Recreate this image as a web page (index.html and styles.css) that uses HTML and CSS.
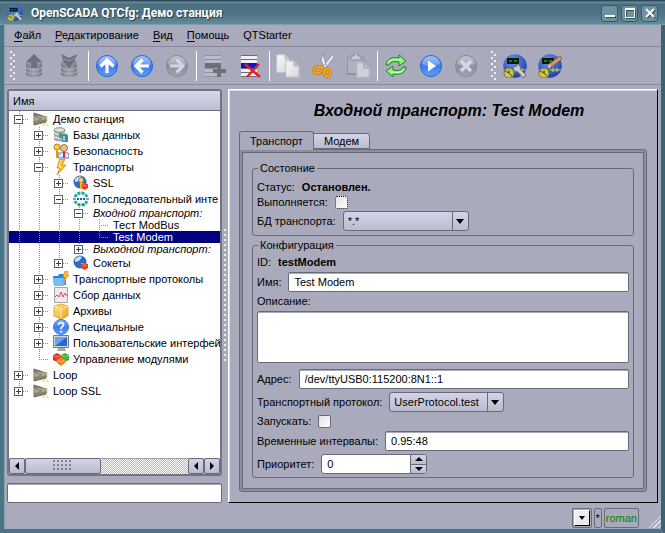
FILE: index.html
```html
<!DOCTYPE html>
<html lang="ru">
<head>
<meta charset="utf-8">
<title>OpenSCADA QTCfg: Демо станция</title>
<link rel="stylesheet" href="styles.css">
</head>
<body>
<svg class="defs" aria-hidden="true">
  <defs>
    <linearGradient id="blue" x1="0" y1="0" x2="0" y2="1"><stop offset="0" stop-color="#8db4ff"/><stop offset=".5" stop-color="#3d7af0"/><stop offset="1" stop-color="#5fa4ff"/></linearGradient>
    <linearGradient id="grey" x1="0" y1="0" x2="0" y2="1"><stop offset="0" stop-color="#b4b5c4"/><stop offset=".5" stop-color="#8c8e9d"/><stop offset="1" stop-color="#a3a5b4"/></linearGradient>
    <linearGradient id="disk" x1="0" y1="0" x2="1" y2="0"><stop offset="0" stop-color="#777986"/><stop offset=".5" stop-color="#a2a3b0"/><stop offset="1" stop-color="#757784"/></linearGradient>
    <linearGradient id="page" x1="0" y1="0" x2="1" y2="1"><stop offset="0" stop-color="#fafafa"/><stop offset="1" stop-color="#d3d4da"/></linearGradient>
    <linearGradient id="gold" x1="0" y1="0" x2="1" y2="1"><stop offset="0" stop-color="#ffe98a"/><stop offset="1" stop-color="#eba11d"/></linearGradient>
    <radialGradient id="globe" cx=".4" cy=".3" r=".8"><stop offset="0" stop-color="#6d91ee"/><stop offset=".7" stop-color="#2d54bd"/><stop offset="1" stop-color="#16347e"/></radialGradient>
  </defs>
  <symbol id="stack" viewBox="0 0 24 24">
    <path d="M4 8v12c0 4 16 4 16 0V8z" fill="url(#disk)"/>
    <path d="M4 13c0 3.500 16 3.500 16 0M4 17c0 3.500 16 3.500 16 0" fill="none" stroke="#b0b2bf"/>
    <ellipse cx="12" cy="8.500" rx="8" ry="3" fill="#92949f"/>
  </symbol>
  <symbol id="load" viewBox="0 0 24 24"><use href="#stack"/><path d="M12 0l8 8h-5v6H9V8H4z" fill="#6e707c"/></symbol>
  <symbol id="save" viewBox="0 0 24 24"><use href="#stack"/><path d="M4 0l4 2 4 2 4-2 4-2-3 9h-1l-4 6-4-6H7z" fill="#6e707c"/><path d="M6 4l6 3 6-3" fill="none" stroke="#9b9daa"/></symbol>
  <symbol id="disc" viewBox="0 0 24 24"><circle cx="12" cy="12" r="10.500" fill="url(#blue)" stroke="#2663cf"/><path d="M3 10a9 8 0 0 1 18 0Q12 15 3 10" fill="#fff" opacity=".22"/></symbol>
  <symbol id="gdisc" viewBox="0 0 24 24"><circle cx="12" cy="12" r="10.500" fill="url(#grey)" stroke="#858795"/><path d="M3 10a9 8 0 0 1 18 0Q12 15 3 10" fill="#fff" opacity=".2"/></symbol>
  <symbol id="arrow" viewBox="0 0 24 24"><path d="M12 19V7M5.500 12.500L12 6l6.500 6.500" fill="none" stroke="currentColor" stroke-width="3.200"/></symbol>
  <symbol id="up" viewBox="0 0 24 24"><use href="#disc"/><use href="#arrow" color="#fff"/></symbol>
  <symbol id="back" viewBox="0 0 24 24"><use href="#disc"/><g transform="rotate(-90 12 12)"><use href="#arrow" color="#fff"/></g></symbol>
  <symbol id="next" viewBox="0 0 24 24"><use href="#gdisc"/><g transform="rotate(90 12 12)"><use href="#arrow" color="#d3d4de"/></g></symbol>
  <symbol id="add" viewBox="0 0 24 24"><path d="M2 1h16v22H2z" fill="#b9bbca"/><path d="M2 1.500h16M2 5.500h16M2 14.500h10M2 18.500h10M2 22.500h16" stroke="#9092a0"/><path d="M2 9h16v5H2z" fill="#6c6e79"/><path d="M16 11v12M10 17h13" stroke="#6d6f7b" stroke-width="4"/></symbol>
  <symbol id="del" viewBox="0 0 24 24"><path d="M3 1h16v22H3z" fill="#f1f1f5"/><path d="M3 1.500h16M3 5.500h16M3 14.500h16M3 18.500h16M3 22.500h16" stroke="#6b6c76"/><path d="M3 9h16v5H3z" fill="#0a14cc"/><path d="M7 10l15 13M21 10L9 23" stroke="#e5202a" stroke-width="2.500"/></symbol>
  <symbol id="copy" viewBox="0 0 24 24"><path d="M1 1h8l4 4v13H1z" fill="url(#page)" stroke="#d9dae2"/><path d="M9 1v4h4" fill="#c3c4cc" stroke="#bbbcc6"/><path d="M10 7h8l5 5v11H10z" fill="url(#page)" stroke="#c2c3cc"/><path d="M18 7v5h5" fill="#c3c4cc" stroke="#adafb9"/></symbol>
  <symbol id="cut" viewBox="0 0 24 24"><path d="M12 0l4 14-2 1-4-9zM21 1l2 2-9 12-3-1z" fill="#e9ebf0" stroke="#8b909c" stroke-width=".8"/><ellipse cx="7" cy="16" rx="4.500" ry="3" transform="rotate(-20 7 16)" fill="none" stroke="#c77608" stroke-width="3.400"/><ellipse cx="7" cy="16" rx="4.500" ry="3" transform="rotate(-20 7 16)" fill="none" stroke="#fba918" stroke-width="2"/><ellipse cx="16" cy="18.500" rx="3" ry="3.800" fill="none" stroke="#c77608" stroke-width="3.400"/><ellipse cx="16" cy="18.500" rx="3" ry="3.800" fill="none" stroke="#fba918" stroke-width="2"/></symbol>
  <symbol id="paste" viewBox="0 0 24 24"><path d="M1 3h17v18H1z" fill="#9193a2"/><path d="M2 4h15v15H2z" fill="#b0b2c0"/><path d="M5 2h3V0h4v2h3v4H5z" fill="#c9cad7" stroke="#8c8e9b"/><path d="M11 9h7l5 5v9H11z" fill="#cfd0db" stroke="#bdbfcc"/><path d="M18 9v5h5" fill="#bbbdc9" stroke="#a2a4b2"/></symbol>
  <symbol id="reload" viewBox="0 0 24 24"><g id="half"><path d="M2 11C3 4 9 3 15 4V1l7 6-7 5V8C9 7 6 8 5 11z" fill="#8eed77" stroke="#188324"/><path d="M4 9c2-4 7-4 13-3" stroke="#d9ffc8" fill="none"/></g><use href="#half" transform="rotate(180 12 12)"/></symbol>
  <symbol id="play" viewBox="0 0 24 24"><use href="#disc"/><path d="M9 6.500l8 5.500-8 5.500z" fill="#fff"/></symbol>
  <symbol id="stop" viewBox="0 0 24 24"><use href="#gdisc"/><path d="M7 7l10 10M17 7L7 17" stroke="#d6d7e1" stroke-width="3.500"/></symbol>
  <symbol id="cfgbase" viewBox="0 0 24 24"><circle cx="12" cy="12" r="11.800" fill="url(#globe)"/><path d="M4 4h12v6H4z" fill="#06180b"/><path d="M6 6v2h3V6zM11 6v2h3V6z" fill="#0a851c"/><circle cx="6" cy="19" r="5" fill="#cbc94b" stroke="#77792b"/><path d="M6 19l-4-2M6 19l3 3M6 19v-3" stroke="#43451e"/><path d="M12 16h11M15 14v4M19 14v4" stroke="#e2d13a"/></symbol>
  <symbol id="cfg" viewBox="0 0 24 24"><use href="#cfgbase"/><path d="M10 12l3 1 1-3 3 2 1 4 5 5-3 3-5-6-4-1z" fill="#c6cad1" stroke="#6d727d"/></symbol>
  <symbol id="vis" viewBox="0 0 24 24"><use href="#cfgbase"/><path d="M22 2l2 3L13 13l-3 1 1-4z" fill="#d39d6b" stroke="#8b623f"/><path d="M11 10l-1 4 3-1z" fill="#f3deb7"/></symbol>
  <symbol id="station" viewBox="0 0 16 16"><path d="M1 2l12 4v5L1 14z" fill="#85857c" stroke="#6b6b66"/><path d="M0 9l2-3 2 3h-3M5 9V6h3M9 9V6h3v2H9M13 6h2M13 9h2" fill="none" stroke="#c6c36a"/><path d="M9 15h2v-2h3v2h2" fill="none" stroke="#e6df75"/></symbol>
  <symbol id="db" viewBox="0 0 16 16"><path d="M1 3v10q6 3 11 0V3z" fill="#a6aaa9"/><ellipse cx="6.500" cy="3" rx="5.500" ry="2.300" fill="#dfe3e0" stroke="#848a88"/><path d="M1 6q6 3 11 0M1 10q6 3 11 0" stroke="#f5f6f5" fill="none"/><path d="M6 6l8 1v5l-8-1z" fill="#46a357"/><path d="M9 8h6v7H9z" fill="#4580c6"/><path d="M10 9h2v5h-2z" fill="#9bcbed"/></symbol>
  <symbol id="secure" viewBox="0 0 16 16"><circle cx="11" cy="5" r="3.500" fill="#ecc08b" stroke="#a76f39"/><path d="M5 15q0-6 6-6t5 6z" fill="#dce9ff" stroke="#4e7fd0"/><path d="M11 9v6" stroke="#d63030" stroke-width="2"/><circle cx="4" cy="4" r="3" fill="#ffd14a" stroke="#c27c10"/><path d="M4 7v8M4 10h2M4 13h2" stroke="#e49a16" stroke-width="2"/></symbol>
  <symbol id="bolt" viewBox="0 0 16 16"><path d="M7 0h5L9 6h4L4 16l3-7H4z" fill="#ffc31f" stroke="#e07a10" stroke-width=".8"/><path d="M8 1L6 8h3" fill="none" stroke="#fff3a8"/></symbol>
  <symbol id="net" viewBox="0 0 16 16"><circle cx="7" cy="7" r="6.500" fill="#2d6cc0"/><path d="M2 4q4-4 7-2l-3 4-4 1zM8 8h4l-2 5z" fill="#c7e2f4"/><path d="M8 9l3-1 4 1v4l-3 2-4-2z" fill="#e3401f"/><path d="M10 10l3 1" stroke="#ffa16d"/></symbol>
  <symbol id="ssl" viewBox="0 0 16 16"><use href="#net"/><circle cx="8" cy="5" r="2.500" fill="#ffd24b" stroke="#b7791a"/><path d="M8 7v7" stroke="#f0b326" stroke-width="2"/></symbol>
  <symbol id="serial" viewBox="0 0 16 16"><path d="M2 6a6.500 6.500 0 0 1 12 0M2 10a6.500 6.500 0 0 0 12 0" fill="none" stroke="#18b19a" stroke-width="3" stroke-dasharray="3 1"/><path d="M5 14h2M10 14h2" stroke="#2c9a35" stroke-width="2"/><path d="M0 8h3M13 8h3" stroke="#1d35b0"/><path d="M4 8h8" stroke="#2d49c9" stroke-width="2" stroke-dasharray="2 1"/></symbol>
  <symbol id="folder" viewBox="0 0 16 16"><path d="M0 5h5l1-2h7v11H1z" fill="#2c83d8"/><path d="M0 7h13l-2 8H1z" fill="#77bdf7"/><path d="M12 0h3l-1 4h2l-6 7 2-5h-2z" fill="#ffc020" stroke="#dd7c12" stroke-width=".7"/></symbol>
  <symbol id="chart" viewBox="0 0 16 16"><path d="M1.500 .5h13v15h-13z" fill="#ececee" stroke="#a4a5ab"/><path d="M2 10l2-2 2 2 2-5 2 5 2-4 2 3" fill="none" stroke="#dc4c4c"/></symbol>
  <symbol id="box" viewBox="0 0 16 16"><path d="M1 3l7-2 7 2v10l-7 3-7-3z" fill="url(#gold)" stroke="#d1901c" stroke-width=".7"/><path d="M1 3l7 3 7-3M8 6v9" fill="none" stroke="#fff0a8"/><path d="M4 2l7 3v3" stroke="#f7c34d" fill="none"/></symbol>
  <symbol id="help" viewBox="0 0 16 16"><circle cx="8" cy="8" r="7.500" fill="url(#blue)" stroke="#3d76d8"/><path d="M5.500 6c0-3.500 5.500-3 5 0-.3 1.500-2.500 1.500-2.500 4M8 11.500v2" fill="none" stroke="#fff" stroke-width="1.700"/></symbol>
  <symbol id="screen" viewBox="0 0 16 16"><path d="M.5 .5h15v12H.5z" fill="#d5d7dc" stroke="#777b85"/><path d="M2 2h12v9H2z" fill="#2866d0"/><path d="M2 2h12L2 11z" fill="#69a4f0"/><path d="M5 13h7l1 3H4z" fill="#a7a9b0"/></symbol>
  <symbol id="modules" viewBox="0 0 16 16"><path d="M0 4l4-2 4 2v5l-4 2-4-2z" fill="#e13a22"/><path d="M8 4l4-2 4 2v5l-4 2-4-2z" fill="#41b03a"/><path d="M4 9l4-3 4 3v3l-4 3-4-3z" fill="#e8851d"/><path d="M0 4l4 2 4-2M8 4l4 2 4-2M4 9l4 2 4-2" stroke="#fff" opacity=".4" fill="none"/></symbol>
</svg>

<div class="window">
  <header class="titlebar">
    <svg class="app-icon" viewBox="0 0 24 24"><use href="#cfg"/></svg>
    <span class="caption">OpenSCADA QTCfg: Демо станция</span>
    <button class="win-btn" aria-label="Свернуть"><svg viewBox="0 0 10 10"><path d="M0 8h10" stroke="#fff" stroke-width="2"/></svg></button>
    <button class="win-btn" aria-label="Развернуть"><svg viewBox="0 0 10 10"><path d="M.5 .5h9v9h-9zM1 1.500h8" fill="none" stroke="#fff"/></svg></button>
    <button class="win-btn" aria-label="Закрыть"><svg viewBox="0 0 10 10"><path d="M1 1l8 8M9 1L1 9" stroke="#fff" stroke-width="2"/></svg></button>
  </header>

  <nav class="menubar">
    <button><u>Ф</u>айл</button>
    <button><u>Р</u>едактирование</button>
    <button><u>В</u>ид</button>
    <button><u>П</u>омощь</button>
    <button>QTStarter</button>
  </nav>

  <div class="toolbar">
    <span class="handle"></span>
    <button aria-label="Загрузить"><svg><use href="#load"/></svg></button>
    <button aria-label="Сохранить"><svg><use href="#save"/></svg></button>
    <span class="sep"></span>
    <button aria-label="Вверх"><svg><use href="#up"/></svg></button>
    <button aria-label="Назад"><svg><use href="#back"/></svg></button>
    <button aria-label="Вперёд"><svg><use href="#next"/></svg></button>
    <span class="sep"></span>
    <button aria-label="Добавить"><svg><use href="#add"/></svg></button>
    <button aria-label="Удалить"><svg><use href="#del"/></svg></button>
    <span class="sep"></span>
    <button aria-label="Копировать"><svg><use href="#copy"/></svg></button>
    <button aria-label="Вырезать"><svg><use href="#cut"/></svg></button>
    <button aria-label="Вставить"><svg><use href="#paste"/></svg></button>
    <span class="sep"></span>
    <button aria-label="Обновить"><svg><use href="#reload"/></svg></button>
    <button aria-label="Запустить"><svg><use href="#play"/></svg></button>
    <button aria-label="Остановить"><svg><use href="#stop"/></svg></button>
    <span class="handle second"></span>
    <button aria-label="Конфигуратор"><svg><use href="#cfg"/></svg></button>
    <button aria-label="Визуализация"><svg><use href="#vis"/></svg></button>
  </div>

  <main class="main">
    <section class="side">
      <div class="tree-frame">
        <div class="tree-head">Имя</div>
        <ul class="tree">
          <li><i class="node first"><button class="exp open" aria-label="Свернуть"></button></i><svg><use href="#station"/></svg><span>Демо станция</span></li>
          <li><i class="line"></i><i class="node"><button class="exp" aria-label="Развернуть"></button></i><svg><use href="#db"/></svg><span>Базы данных</span></li>
          <li><i class="line"></i><i class="node"><button class="exp" aria-label="Развернуть"></button></i><svg><use href="#secure"/></svg><span>Безопасность</span></li>
          <li><i class="line"></i><i class="node"><button class="exp open" aria-label="Свернуть"></button></i><svg><use href="#bolt"/></svg><span>Транспорты</span></li>
          <li><i class="line"></i><i class="line"></i><i class="node"><button class="exp" aria-label="Развернуть"></button></i><svg><use href="#ssl"/></svg><span>SSL</span></li>
          <li><i class="line"></i><i class="line"></i><i class="node"><button class="exp open" aria-label="Свернуть"></button></i><svg><use href="#serial"/></svg><span>Последовательный инте</span></li>
          <li class="text"><i class="line"></i><i class="line"></i><i class="line"></i><i class="node"><button class="exp open" aria-label="Свернуть"></button></i><em>Входной транспорт:</em></li>
          <li class="text"><i class="line"></i><i class="line"></i><i class="line"></i><i class="line"></i><i class="node"></i><span>Тест ModBus</span></li>
          <li class="text selected"><i class="line"></i><i class="line"></i><i class="line"></i><i class="line"></i><i class="node last"></i><span>Test Modem</span></li>
          <li class="text"><i class="line"></i><i class="line"></i><i class="line"></i><i class="node last"><button class="exp" aria-label="Развернуть"></button></i><em>Выходной транспорт:</em></li>
          <li><i class="line"></i><i class="line"></i><i class="node last"><button class="exp" aria-label="Развернуть"></button></i><svg><use href="#net"/></svg><span>Сокеты</span></li>
          <li><i class="line"></i><i class="node"><button class="exp" aria-label="Развернуть"></button></i><svg><use href="#folder"/></svg><span>Транспортные протоколы</span></li>
          <li><i class="line"></i><i class="node"><button class="exp" aria-label="Развернуть"></button></i><svg><use href="#chart"/></svg><span>Сбор данных</span></li>
          <li><i class="line"></i><i class="node"><button class="exp" aria-label="Развернуть"></button></i><svg><use href="#box"/></svg><span>Архивы</span></li>
          <li><i class="line"></i><i class="node"><button class="exp" aria-label="Развернуть"></button></i><svg><use href="#help"/></svg><span>Специальные</span></li>
          <li><i class="line"></i><i class="node"><button class="exp" aria-label="Развернуть"></button></i><svg><use href="#screen"/></svg><span>Пользовательские интерфей</span></li>
          <li><i class="line"></i><i class="node last"></i><svg><use href="#modules"/></svg><span>Управление модулями</span></li>
          <li><i class="node"><button class="exp" aria-label="Развернуть"></button></i><svg><use href="#station"/></svg><span>Loop</span></li>
          <li><i class="node last"><button class="exp" aria-label="Развернуть"></button></i><svg><use href="#station"/></svg><span>Loop SSL</span></li>
        </ul>
        <div class="scroll">
          <button aria-label="Влево"><svg viewBox="0 0 6 8"><path d="M5 0v8L1 4z"/></svg></button>
          <div class="thumb"><i></i></div>
          <div class="track"></div>
          <button aria-label="Влево"><svg viewBox="0 0 6 8"><path d="M5 0v8L1 4z"/></svg></button>
          <button aria-label="Вправо"><svg viewBox="0 0 6 8"><path d="M1 0v8l4-4z"/></svg></button>
        </div>
      </div>
      <input class="field" type="text" aria-label="Поиск">
    </section>

    <div class="splitter"><i></i></div>

    <section class="panel">
      <h1>Входной транспорт: Test Modem</h1>
      <div class="tabs">
        <button class="tab active">Транспорт</button>
        <button class="tab">Модем</button>
      </div>
      <form class="pane">
        <fieldset class="state">
          <legend>Состояние</legend>
          <div class="row short"><span>Статус:</span><b>Остановлен.</b></div>
          <div class="row short"><label for="run">Выполняется:</label><input class="check focus" id="run" type="checkbox"></div>
          <div class="row"><label for="db-sel">БД транспорта:</label><span class="combo wide"><select id="db-sel"><option>*.*</option></select><svg viewBox="0 0 8 5"><path d="M0 0h8L4 5z"/></svg></span></div>
        </fieldset>
        <fieldset>
          <legend>Конфигурация</legend>
          <div class="row short"><span>ID:</span><b>testModem</b></div>
          <div class="row"><label for="name">Имя:</label><input class="field" id="name" type="text" value="Test Modem"></div>
          <div class="row short"><label for="descr">Описание:</label></div>
          <textarea class="field" id="descr"></textarea>
          <div class="row"><label for="addr">Адрес:</label><input class="field" id="addr" type="text" value="/dev/ttyUSB0:115200:8N1::1"></div>
          <div class="row"><label for="proto">Транспортный протокол:</label><span class="combo"><select id="proto"><option>UserProtocol.test</option></select><svg viewBox="0 0 8 5"><path d="M0 0h8L4 5z"/></svg></span></div>
          <div class="row short"><label for="start">Запускать:</label><input class="check" id="start" type="checkbox"></div>
          <div class="row"><label for="times">Временные интервалы:</label><input class="field" id="times" type="text" value="0.95:48"></div>
          <div class="row"><label for="prior">Приоритет:</label><span class="spin"><input id="prior" type="text" value="0"><span><button type="button" aria-label="Больше"><svg viewBox="0 0 8 4"><path d="M0 4h8L4 0z"/></svg></button><button type="button" aria-label="Меньше"><svg viewBox="0 0 8 4"><path d="M0 0h8L4 4z"/></svg></button></span></span></div>
        </fieldset>
      </form>
    </section>
  </main>

  <footer class="statusbar">
    <span class="cell"><button class="drop" aria-label="Сообщения"><svg viewBox="0 0 6 4"><path d="M0 0h6L3 4z"/></svg></button></span>
    <span class="cell">*</span>
    <span class="cell user">roman</span>
    <i class="grip"></i>
  </footer>
</div>
</body>
</html>
```
FILE: styles.css
```css
:root {
  --bg: #a9abbc;
  --line: #696b78;
  --face: linear-gradient(#d3d4e8, #b9bbce);
}

* { box-sizing: border-box; }

body {
  margin: 0;
  font: 11px/13px "Liberation Sans", Arial, sans-serif;
  color: #000;
}

button, input, select, textarea {
  font: inherit;
  color: inherit;
  margin: 0;
  padding: 0;
  border: 0;
  background: none;
  border-radius: 0;
  outline: none;
}

ul { margin: 0; padding: 0; list-style: none; }
.defs { position: absolute; width: 0; height: 0; }

.window {
  display: flex;
  flex-direction: column;
  min-height: 100vh;
  background: var(--bg);
  border: 4px solid #4b7587;
  border-top: 0;
  box-shadow: inset 1px 0 #86a4b4;
  border-right-color: #3e6273;
}

/* Title bar */
.titlebar {
  display: flex;
  align-items: center;
  height: 25px;
  gap: 3px;
  margin: 0 -4px;
  padding: 2px 7px 0 7px;
  background: linear-gradient(#2f4b58 0 1px, #6b919f 2px, #4a7082 4px, #4f7688 60%, #618a9b);
  border-bottom: 1px solid #7e9eac;
}
.app-icon { width: 16px; height: 16px; }
.caption {
  flex: 1;
  padding-left: 5px;
  font: bold 12px/16px Roboto, "Noto Sans", sans-serif;
  color: #fff;
  text-shadow: 1px 1px 1px #203843;
}
.win-btn {
  display: grid;
  place-items: center;
  width: 17px;
  height: 17px;
  border: 1px solid #3a5a69;
  border-radius: 3px;
  background: #6e91a0;
}
.win-btn svg { width: 10px; height: 10px; filter: drop-shadow(1px 1px 0 #35505d); }

/* Menu */
.menubar {
  display: flex;
  gap: 14px;
  height: 22px;
  padding: 0 10px;
  border-bottom: 1px solid #85879a;
}
.menubar u { text-underline-offset: 2px; }

/* Toolbar */
.toolbar {
  display: flex;
  align-items: center;
  height: 38px;
  padding-left: 6px;
  border-bottom: 1px solid #85879a;
}
.toolbar button {
  display: grid;
  place-items: center;
  width: 35px;
  height: 35px;
}
.toolbar svg { width: 24px; height: 24px; }
.sep {
  width: 3px;
  height: 30px;
  border-right: 1px solid #fff;
}
.handle {
  width: 6px;
  height: 30px;
  background:
    conic-gradient(from 270deg at 2px 2px, #eeeef3 25%, transparent 0) 0 0 / 6px 6px,
    conic-gradient(from 270deg at 2px 2px, #eeeef3 25%, transparent 0) 3px 3px / 6px 6px;
}
.handle.second { margin-left: 8px; }

/* Layout */
.main {
  flex: 1;
  display: grid;
  grid-template-columns: minmax(0, 1fr) 6px minmax(0, 2fr);
  padding: 4px 3px 5px;
}
.side { display: flex; flex-direction: column; gap: 7px; }
.splitter { display: grid; align-items: center; justify-content: center; }
.splitter i {
  width: 3px;
  height: 134px;
  background: conic-gradient(from 270deg at 2px 2px, #eeeef3 25%, transparent 0) 0 0 / 3px 5px;
}

/* Tree */
.tree-frame {
  flex: 1;
  display: flex;
  flex-direction: column;
  border: 2px solid #737583;
  border-radius: 3px;
  background: #fff;
  overflow: hidden;
}
.tree-head {
  height: 20px;
  padding: 0 4px;
  line-height: 20px;
  background: linear-gradient(#d6d7ea, #bcbed1);
  border-bottom: 1px solid var(--line);
}
.tree { flex: 1; overflow: hidden; }
.tree li {
  display: flex;
  align-items: center;
  height: 16px;
  white-space: nowrap;
}
.tree li.text { height: 12px; }
.tree svg { flex: none; width: 16px; height: 16px; margin-left: 4px; }
.tree span, .tree em { padding-left: 4px; }
.tree .selected { background: #000080; color: #fff; }
.line, .node {
  flex: none;
  width: 20px;
  height: 100%;
  background: repeating-linear-gradient(#8d8f9b 0 1px, transparent 1px 2px) 10px 0 / 1px 100% no-repeat;
}
.node {
  display: flex;
  align-items: center;
  padding-left: 5px;
  background:
    repeating-linear-gradient(#8d8f9b 0 1px, transparent 1px 2px) 10px 0 / 1px 100% no-repeat,
    repeating-linear-gradient(90deg, #8d8f9b 0 1px, transparent 1px 2px) 10px 50% / 10px 1px no-repeat;
}
.node.last { background-size: 1px 50%, 10px 1px; }
.exp {
  width: 9px;
  height: 9px;
  border: 1px solid #5d5f6a;
  background:
    linear-gradient(#3c3d46, #3c3d46) center / 5px 1px no-repeat,
    linear-gradient(#3c3d46, #3c3d46) center / 1px 5px no-repeat,
    #fff;
}
.exp.open { background: linear-gradient(#3c3d46, #3c3d46) center / 5px 1px no-repeat, #fff; }

/* Scroll bar */
.scroll { display: flex; height: 16px; background: #c9cad6; }
.scroll button, .thumb {
  display: grid;
  place-items: center;
  width: 16px;
  border: 1px solid var(--line);
  border-radius: 2px;
  background: var(--face);
}
.scroll svg { width: 6px; height: 8px; }
.thumb { width: 76px; }
.thumb i {
  width: 20px;
  height: 12px;
  background: conic-gradient(from 270deg at 2px 2px, #80828f 25%, transparent 0) 0 0 / 4px 4px;
}
.track {
  flex: 1;
  border-top: 1px solid #9b9dab;
  background: repeating-conic-gradient(#b4b6c4 0 25%, #fff 0 50%) 0 0 / 2px 2px;
}

/* Fields */
.field {
  flex: 1;
  min-width: 0;
  height: 20px;
  padding: 0 5px;
  border: 1px solid var(--line);
  border-radius: 2px;
  background: #fff;
  box-shadow: inset 0 1px #a9abb6;
}
.side .field { flex: none; }

/* Panel */
.panel {
  border: 1px solid;
  border-color: #fff #000 #000 #fff;
  box-shadow: inset 1px 1px #dcdde6;
  padding: 0 10px 10px;
  display: flex;
  flex-direction: column;
}
h1 {
  margin: 0;
  padding-left: 12px;
  font: italic bold 16px/41px "Liberation Sans", Arial, sans-serif;
  text-align: center;
}
.tabs { display: flex; align-items: flex-end; }
.tab {
  height: 16px;
  padding: 0 10px;
  border: 1px solid var(--line);
  border-left: 0;
  border-radius: 0 3px 0 0;
  background: var(--face);
}
.tab.active {
  height: 19px;
  margin-bottom: -1px;
  z-index: 1;
  border-left: 1px solid var(--line);
  border-bottom: 0;
  border-radius: 3px 3px 0 0;
  background: var(--bg);
}
.pane {
  flex: 1;
  padding: 12px;
  border: 1px solid var(--line);
  border-radius: 0 3px 3px 3px;
  box-shadow: inset 0 0 0 2px #8d8f9d, inset 0 0 0 3px var(--line);
}
fieldset {
  display: grid;
  gap: 3px;
  min-width: 0;
  margin: 0 0 3px;
  padding: 4px 4px 3px;
  border: 1px solid var(--line);
  border-radius: 3px;
}
fieldset:last-child { margin: 0; }
.state { gap: 2px; padding: 6px 4px 4px; }
legend { margin-left: 1px; padding: 0 2px; }
.row { display: flex; align-items: center; gap: 7px; height: 20px; }
.row.short { height: 13px; }
textarea.field { display: block; width: 100%; height: 52px; margin-bottom: 3px; resize: none; }
.check {
  appearance: none;
  width: 13px;
  height: 13px;
  border: 1px solid var(--line);
  border-radius: 2px;
  background: linear-gradient(135deg, #e2e2e8, #fff);
}
.check.focus { border: 1px dotted #000; }

.combo {
  display: inline-flex;
  position: relative;
  height: 20px;
  border: 1px solid var(--line);
  border-radius: 3px;
  background: var(--face);
}
.combo.wide { width: 126px; }
.combo select { appearance: none; flex: 1; padding: 0 24px 0 4px; }
.combo::after {
  content: "";
  position: absolute;
  right: 15px;
  top: 0;
  bottom: 0;
  border-left: 1px solid var(--line);
}
.combo svg { position: absolute; right: 4px; top: 7px; width: 8px; height: 5px; pointer-events: none; }

.spin {
  display: flex;
  width: 106px;
  height: 20px;
  border: 1px solid var(--line);
  border-radius: 3px;
  background: #fff;
  overflow: hidden;
}
.spin input { flex: 1; min-width: 0; padding: 0 5px; }
.spin > span { display: grid; width: 16px; border-left: 1px solid var(--line); }
.spin button { display: grid; place-items: center; background: var(--face); }
.spin button + button { border-top: 1px solid var(--line); }
.spin svg { width: 8px; height: 4px; }

/* Status bar */
.statusbar { display: flex; justify-content: flex-end; gap: 2px; height: 21px; padding-bottom: 1px; }
.cell {
  display: grid;
  place-items: center;
  min-width: 8px;
  padding: 0 1px;
  border: 1px solid var(--line);
  border-radius: 2px;
}
.user { color: #008000; }
.drop {
  display: grid;
  place-items: center;
  width: 16px;
  height: 16px;
  border: 1px solid;
  border-color: #fff #000 #000 #fff;
  background: #ececec;
}
.drop svg { width: 6px; height: 4px; }
.grip {
  align-self: flex-end;
  width: 14px;
  height: 14px;
  margin-left: 6px;
  background: repeating-linear-gradient(135deg, transparent 0 2px, #e6e7ee 2px 3px);
  clip-path: polygon(100% 0, 100% 100%, 0 100%);
}
```
